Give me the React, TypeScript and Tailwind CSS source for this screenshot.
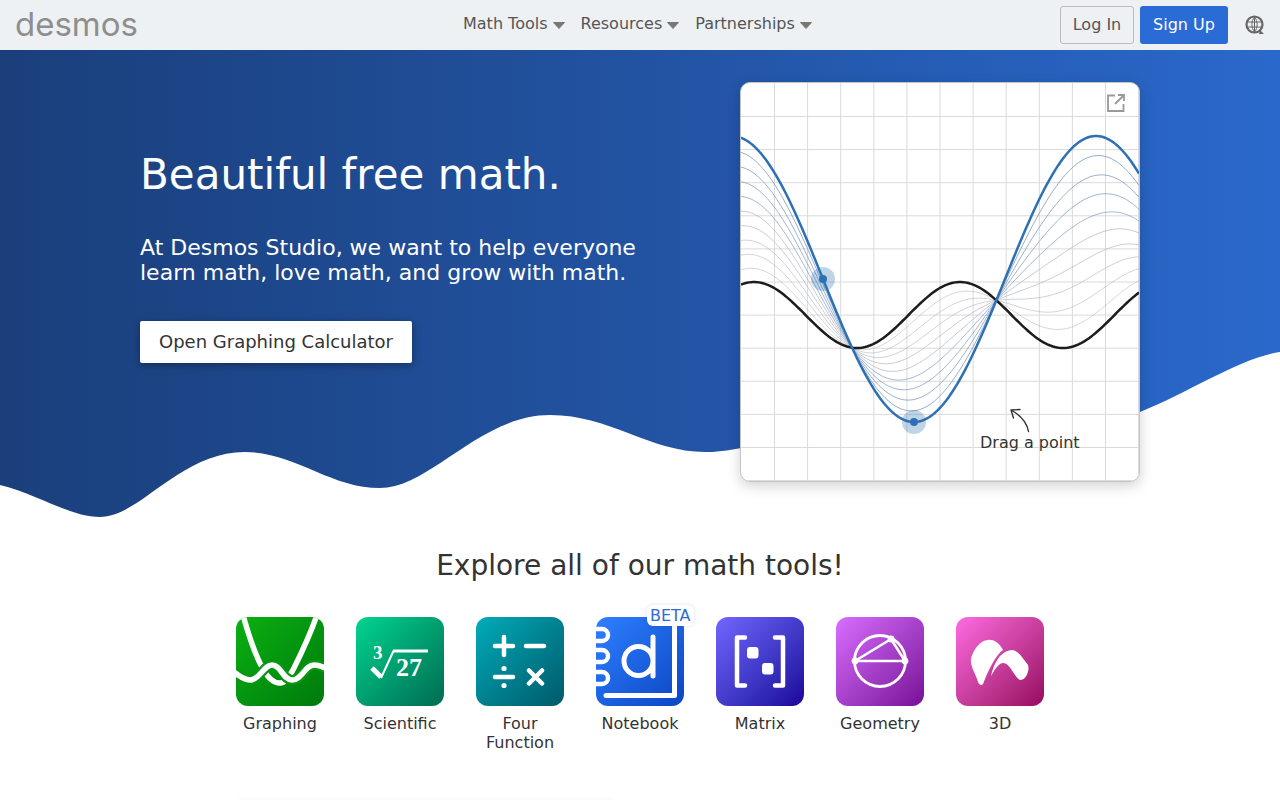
import { ReactNode } from 'react';

const NAV = ['Math Tools', 'Resources', 'Partnerships'];

const curveBlue = (x: number) => 279 + 143 * Math.sin(((x - 823) * 2 * Math.PI) / 364);
const curveBlack = (x: number) => 315 - 33 * Math.cos(((x - 960) * 2 * Math.PI) / 206);

const buildPath = (t: number) => {
    const pts: string[] = [];
    for (let x = 741; x <= 1139; x += 2) {
        const y = (1 - t) * curveBlack(x) + t * curveBlue(x);
        pts.push(`${x},${y.toFixed(2)}`);
    }
    return `M${pts.join('L')}`;
};

const GRID = Array.from({ length: 12 }, (_, i) => i);
const STEPS = [0.1, 0.2, 0.3, 0.4, 0.5, 0.6, 0.7, 0.8, 0.9];

const Caret = () => (
    <svg viewBox="0 0 12 7" className="ml-[5px] mt-[2px] h-[7px] w-3" fill="#777" stroke="#777" strokeLinejoin="round">
        <path d="M0.5 0.5H11.5L6 6.5Z" />
    </svg>
);

const Graph = () => (
    <div className="relative h-[400px] w-[400px] shrink-0 overflow-hidden rounded-[10px] border border-[#c4c4c4] bg-white shadow-[0_4px_14px_rgba(0,0,0,0.18)]">
        <svg viewBox="741 83 398 398" className="block h-[398px] w-[398px]">
            {GRID.map((i) => (
                <g key={i} stroke="#dadada" strokeWidth="1">
                    <line x1={774.5 + i * 33.1} x2={774.5 + i * 33.1} y1="83" y2="481" />
                    <line x1="741" x2="1139" y1={116.5 + i * 33.1} y2={116.5 + i * 33.1} />
                </g>
            ))}
            {STEPS.map((t) => (
                <path key={t} d={buildPath(t)} fill="none" stroke={t > 0.5 ? '#7f9bbf' : '#a9b0ba'} strokeOpacity={0.45 + t * 0.4} strokeWidth="1" />
            ))}
            <path d={buildPath(0)} fill="none" stroke="#1c1c1c" strokeWidth="2.5" />
            <path d={buildPath(1)} fill="none" stroke="#2d70b3" strokeWidth="2.5" />
            <circle cx="823" cy="279" r="12" fill="#2d70b3" fillOpacity="0.3" />
            <circle cx="823" cy="279" r="4" fill="#2d70b3" />
            <circle cx="914" cy="422" r="12" fill="#2d70b3" fillOpacity="0.3" />
            <circle cx="914" cy="422" r="4" fill="#2d70b3" />
            <path d="M1028.5 431.5C1027 423 1020 415 1011 410M1011 410L1013.5 418M1011 410L1020 409.5" fill="none" stroke="#333" strokeWidth="1.4" strokeLinecap="round" />
        </svg>
        <svg viewBox="0 0 18 18" className="absolute right-[14px] top-[11px] h-[18px] w-[18px]" fill="none" stroke="#999" strokeWidth="1.8">
            <path d="M8 1.5H1V17H16.5V10M8 10L17 1M11 1H17V7" />
        </svg>
        <span className="absolute left-[239px] top-[350px] text-base leading-5 text-[#333]">Drag a point</span>
    </div>
);

const Tile = ({ bg, children }: { bg: string; children: ReactNode }) => (
    <div className={`h-[89px] w-[88px] overflow-hidden rounded-xl ${bg}`}>
        <svg viewBox="0 0 88 89" className="block h-[89px] w-[88px]" fill="none" stroke="#fff" strokeLinecap="round" strokeLinejoin="round">
            {children}
        </svg>
    </div>
);

const TOOLS: { name: ReactNode; bg: string; art: ReactNode; beta?: boolean }[] = [
    {
        name: 'Graphing',
        bg: 'bg-linear-to-br from-[#0bb012] to-[#007a0c]',
        art: (
            <>
                <path d="M7 -2C12 16 19 38 27 52C33 63 38 66 44 66C50 66 53 60 58 51C66 35 75 15 81 -2" strokeWidth="5.5" strokeLinecap="butt" />
                <path d="M-3 54C5 61 10 63 15 63C24 62 28 48 36 48C45 48 47 63 56 63C66 63 69 48 78 48C82 48 86 49 91 52" stroke="#07960f" strokeWidth="10" />
                <path d="M-3 54C5 61 10 63 15 63C24 62 28 48 36 48C45 48 47 63 56 63C66 63 69 48 78 48C82 48 86 49 91 52" strokeWidth="5.5" />
            </>
        ),
    },
    {
        name: 'Scientific',
        bg: 'bg-linear-to-br from-[#00d592] to-[#006c50]',
        art: (
            <>
                <path d="M37 34H72" strokeWidth="2.8" strokeLinecap="butt" />
                <path d="M37.5 34L25 61" strokeWidth="2" strokeLinecap="butt" />
                <path d="M16 51L25 60" strokeWidth="5" strokeLinecap="butt" />
                <text x="40" y="59" fill="#fff" stroke="none" fontFamily="'Liberation Serif',serif" fontWeight="700" fontSize="26">27</text>
                <text x="17" y="42" fill="#fff" stroke="none" fontFamily="'Liberation Serif',serif" fontWeight="700" fontSize="19">3</text>
            </>
        ),
    },
    {
        name: <>Four<br />Function</>,
        bg: 'bg-linear-to-br from-[#00acbb] to-[#005a69]',
        art: (
            <>
                <g strokeWidth="4.5">
                    <path d="M19 29H37M28 20V38M50 29H68M19 60H37M53 53.5L66 66.5M66 53.5L53 66.5" />
                </g>
                <circle cx="28" cy="51.5" r="2.6" fill="#fff" stroke="none" />
                <circle cx="28" cy="68.5" r="2.6" fill="#fff" stroke="none" />
            </>
        ),
    },
    {
        name: 'Notebook',
        bg: 'bg-linear-to-br from-[#2f80ff] to-[#0c45c4]',
        beta: true,
        art: (
            <>
                <path d="M78.5 -3V78.5H10" strokeWidth="5" />
                <path d="M57 20V59M57 44A14.5 14.5 0 1 1 28 44A14.5 14.5 0 1 1 57 44" strokeWidth="5" />
                <path d="M-3 12H6A6 6 0 0 1 6 24H-3M-3 33H6A6 6 0 0 1 6 45H-3M-3 55H6A6 6 0 0 1 6 67H-3" strokeWidth="4.5" />
            </>
        ),
    },
    {
        name: 'Matrix',
        bg: 'bg-linear-to-br from-[#7466ff] to-[#1d009a]',
        art: (
            <>
                <path d="M29 20.5H21V68.5H29M59 20.5H67V68.5H59" strokeWidth="4.5" />
                <rect x="31" y="30" width="11.5" height="11.5" rx="3" fill="#fff" stroke="none" />
                <rect x="46" y="46" width="11.5" height="11.5" rx="3" fill="#fff" stroke="none" />
            </>
        ),
    },
    {
        name: 'Geometry',
        bg: 'bg-linear-to-br from-[#da6dff] to-[#770c98]',
        art: (
            <>
                <circle cx="44" cy="44" r="25.5" strokeWidth="2.8" />
                <path d="M19 44H69M19 44L55 22L69 44" strokeWidth="2.6" />
                <circle cx="19" cy="44" r="3.4" fill="#fff" stroke="none" />
                <circle cx="69" cy="44" r="3.4" fill="#fff" stroke="none" />
                <circle cx="55" cy="22" r="3.4" fill="#fff" stroke="none" />
            </>
        ),
    },
    {
        name: '3D',
        bg: 'bg-linear-to-br from-[#ff6be2] to-[#950860]',
        art: (
            <path
                d="M15 42C17 33 24 23 32 23C38 22 44 27 47 33C39 39 33 52 27 67C26 69 23 68 22 65C20 57 14 50 15 42ZM35 59C37 50 40 44 44 39C48 35 52 33 56 33C62 33 68 43 72 48C74 53 70 63 65 63C62 63 60 59 57 55C54 50 51 46 47 46C43 46 39 52 35 59Z"
                fill="#fff"
                stroke="none"
            />
        ),
    },
];

export default function App() {
    return (
        <div className="h-[800px] overflow-hidden bg-white font-['DejaVu_Sans',sans-serif] text-[#333]">
            <header className="flex h-[50px] items-center bg-[#eef1f3] text-[#555]">
                <a className="w-[463px] pb-[2px] pl-[15px] font-['Inter',sans-serif] text-[33px] font-normal leading-none text-[#8e8e8e]">desmos</a>
                <nav className="flex gap-4 pb-[2px]">
                    {NAV.map((item) => (
                        <a key={item} className="flex items-center text-base">
                            {item}
                            <Caret />
                        </a>
                    ))}
                </nav>
                <div className="ml-auto flex items-center gap-[6px] pr-[15px]">
                    <button className="h-[38px] w-[74px] rounded-[3px] border border-[#bbb] text-base text-[#555]">Log In</button>
                    <button className="h-[38px] w-[88px] rounded-[3px] bg-[#2a6bd6] text-base text-white">Sign Up</button>
                    <svg viewBox="0 0 20 20" className="ml-[11px] h-5 w-5" fill="none" stroke="#666">
                        <circle cx="9.5" cy="9.5" r="8" strokeWidth="2.2" />
                        <path d="M9.5 2C6 6 6 13 9.5 17M9.5 2C13 6 13 13 9.5 17M2 7H17M2 12H17M9.5 2V17" strokeWidth="1" />
                        <path d="M15 15L19 19H14Z" fill="#666" stroke="none" />
                    </svg>
                </div>
            </header>

            <section className="relative h-[470px] bg-linear-to-r from-[#1a3f7b] to-[#2a68cb]">
                <svg viewBox="0 0 1280 170" className="absolute bottom-0 left-0 h-[170px] w-[1280px]">
                    <path
                        d="M0 135C40 145 70 167 100 167C140 167 180 102 245 102C295 102 330 138 380 138C430 138 480 65 550 65C610 65 650 102 705 102C780 102 860 40 960 60C1030 75 1090 82 1140 62C1190 42 1240 8 1280 2V170H0Z"
                        fill="#fff"
                    />
                </svg>
                <div className="relative mx-auto flex w-[1000px] justify-between pt-8">
                    <div className="pt-[65px]">
                        <h1 className="text-[42px] font-normal leading-[56px] text-white">Beautiful free math.</h1>
                        <p className="mt-[32px] text-[22px] leading-[25px] text-white">
                            At Desmos Studio, we want to help everyone
                            <br />
                            learn math, love math, and grow with math.
                        </p>
                        <button className="mt-[36px] h-[42px] w-[272px] rounded-[2px] bg-white text-lg text-[#333] shadow-[0_2px_8px_rgba(0,0,0,0.35)]">Open Graphing Calculator</button>
                    </div>
                    <Graph />
                </div>
            </section>

            <section className="flex flex-col items-center pt-[28px]">
                <h2 className="text-[28px] font-normal leading-9 text-[#333]">Explore all of our math tools!</h2>
                <div className="mt-[33px] flex">
                    {TOOLS.map((tool, i) => (
                        <div key={i} className="relative flex w-[120px] flex-col items-center text-center">
                            <Tile bg={tool.bg}>{tool.art}</Tile>
                            {tool.beta && (
                                <span className="absolute left-[67px] top-[-12px] rounded-md bg-white px-[3px] text-base leading-[21px] text-[#2f6bce] shadow-[0_0_4px_rgba(0,0,0,0.12)]">BETA</span>
                            )}
                            <span className="mt-[8px] text-base leading-[19px] text-[#333]">{tool.name}</span>
                        </div>
                    ))}
                </div>
                <div className="mr-[430px] mt-[50px] h-[100px] w-[375px] bg-white shadow-[0_0_8px_rgba(0,0,0,0.08)]" />
            </section>
        </div>
    );
}
